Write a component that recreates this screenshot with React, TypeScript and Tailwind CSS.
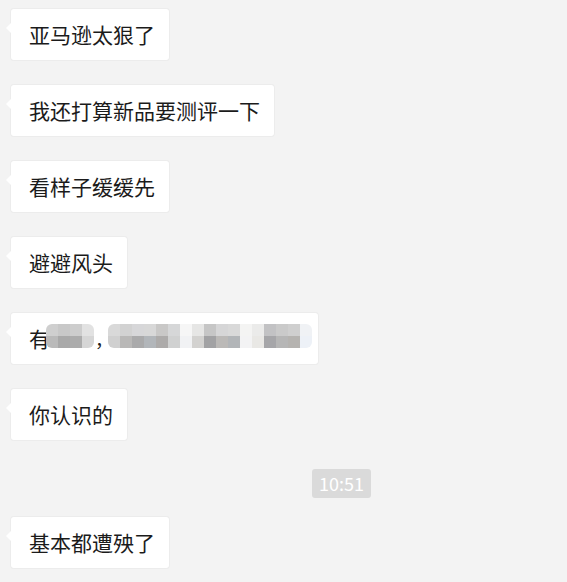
import React from 'react';

const font = { fontFamily: '"Noto Sans CJK SC", "Noto Sans", sans-serif' };

const blurRow1 = ['#d9d9d9', '#d2d2d2', '#d7d7d9', '#d8d8d8', '#c9c8c7', '#d6d7d8', '#f6f6f6', '#e6e6e5', '#c6c6c6', '#d6d6d7', '#d9d9d9', '#f4f4f3', '#ebebea', '#c2c2c4', '#cacaca', '#cfcfcf', '#f0f2f5'];
const blurRow2 = ['#d0d0d0', '#b9b8b7', '#aaaaab', '#b2b6ba', '#adabaa', '#d0d1d1', '#f1f2f4', '#d3d2d0', '#a2a2a4', '#bbb9b7', '#b2b5b8', '#f3f3f4', '#e9e8e5', '#a6a6a9', '#b6b6b6', '#b5b3b0', '#edf1f7'];
const blurA1 = ['#cfcfcf', '#c8c8c8', '#cdcdcd', '#e2e2e2'];
const blurA2 = ['#bababa', '#a9a9a9', '#acacac', '#d6d6d6'];

const Bubble = ({ children, pr = 'pr-[14px]' }: { children: React.ReactNode; pr?: string }) => (
  <div className={`relative flex h-[51px] items-center rounded-[3px] bg-white pl-[18px] ${pr} text-[21px] text-[#1b1b1b] shadow-[0_0_0_1px_#ececec]`}>
    <div className="absolute -left-[5px] top-[13px] h-0 w-0 border-y-[6px] border-r-[6px] border-y-transparent border-r-white" />
    {children}
  </div>
);

const Blocks = ({ r1, r2 }: { r1: string[]; r2: string[] }) => (
  <div className="flex flex-col overflow-hidden rounded-[6px]">
    <div className="flex">
      {r1.map((c, i) => (
        <div key={i} className="h-[12px] w-[12px]" style={{ backgroundColor: c }} />
      ))}
    </div>
    <div className="flex">
      {r2.map((c, i) => (
        <div key={i} className="h-[12px] w-[12px]" style={{ backgroundColor: c }} />
      ))}
    </div>
  </div>
);

export default function App() {
  const msgs = ['亚马逊太狠了', '我还打算新品要测评一下', '看样子缓缓先', '避避风头'];
  return (
    <div className="min-h-[582px] w-full bg-[#f3f3f3] px-[11px] pt-[9px]" style={font}>
      <div className="flex flex-col items-start gap-[25px]">
        {msgs.map((m) => (
          <Bubble key={m}>{m}</Bubble>
        ))}
        <Bubble pr="pr-[6px]">
          <span className="leading-none">有</span>
          <div className="-ml-[4px] -mt-[6px]">
            <Blocks r1={blurA1} r2={blurA2} />
          </div>
          <span className="ml-[1px] text-[18px] leading-none">，</span>
          <div className="-ml-[5px] -mt-[6px]">
            <Blocks r1={blurRow1} r2={blurRow2} />
          </div>
        </Bubble>
        <Bubble>你认识的</Bubble>
      </div>
      <div className="ml-[301px] mt-[29px] flex h-[29px] w-[59px] items-center justify-center rounded-[3px] bg-[#dadada] text-[18px] text-white">
        10:51
      </div>
      <div className="mt-[19px] flex flex-col items-start">
        <Bubble>基本都遭殃了</Bubble>
      </div>
    </div>
  );
}
